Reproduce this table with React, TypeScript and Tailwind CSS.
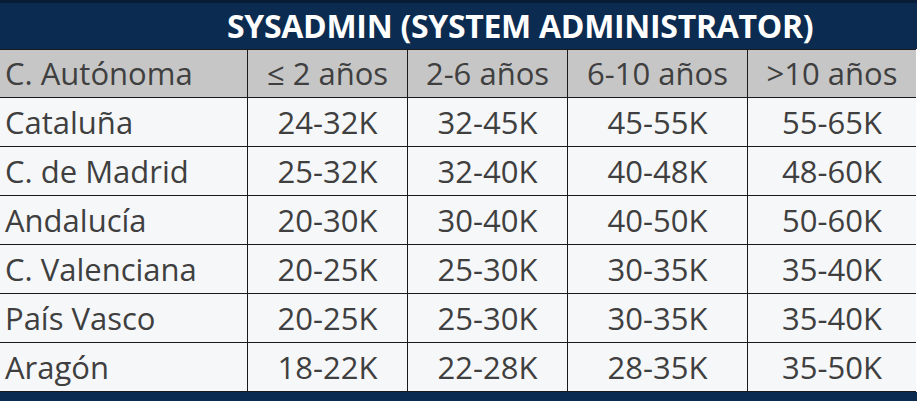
const header = ['C. Autónoma', '≤ 2 años', '2-6 años', '6-10 años', '>10 años'];

const rows = [
  ['Cataluña', '24-32K', '32-45K', '45-55K', '55-65K'],
  ['C. de Madrid', '25-32K', '32-40K', '40-48K', '48-60K'],
  ['Andalucía', '20-30K', '30-40K', '40-50K', '50-60K'],
  ['C. Valenciana', '20-25K', '25-30K', '30-35K', '35-40K'],
  ['País Vasco', '20-25K', '25-30K', '30-35K', '35-40K'],
  ['Aragón', '18-22K', '22-28K', '28-35K', '35-50K'],
];

const cols = 'grid grid-cols-[248px_160px_160px_180px_168px]';

export default function App() {
  return (
    <div className="w-[917px] h-[401px] bg-white font-['Open_Sans',sans-serif] text-[#3f3f3f] overflow-hidden">
      {/* Title */}
      <div className="h-[49px] bg-[#0c2b50] border-t-[3px] border-[#081c36] flex items-center pl-[227px]">
        <h1 className="text-[32px] font-bold text-white tracking-[-0.3px] leading-none">
          SYSADMIN (SYSTEM ADMINISTRATOR)
        </h1>
      </div>

      {/* Header row */}
      <div className={`${cols} h-[49px] bg-[#c6c6c6] border-t border-b border-[#1a1a1a] w-[916px]`}>
        {header.map((h, i) => (
          <div
            key={i}
            className={`flex items-center text-[31px] leading-none border-[#1a1a1a] ${i === 0 ? 'pl-[5px]' : 'justify-center'} ${i < 4 ? 'border-r' : ''}`}
          >
            {h}
          </div>
        ))}
      </div>

      {/* Data rows */}
      {rows.map((r, ri) => (
        <div key={ri} className={`${cols} h-[49px] bg-[#f6f7f9] border-b border-[#1a1a1a] w-[916px]`}>
          {r.map((c, i) => (
            <div
              key={i}
              className={`flex items-center text-[31px] leading-none border-[#1a1a1a] ${i === 0 ? 'pl-[5px]' : 'justify-center'} ${i < 4 ? 'border-r' : ''}`}
            >
              {c}
            </div>
          ))}
        </div>
      ))}

      {/* Bottom band */}
      <div className="h-[9px] bg-[#0c2b50]" />
    </div>
  );
}
